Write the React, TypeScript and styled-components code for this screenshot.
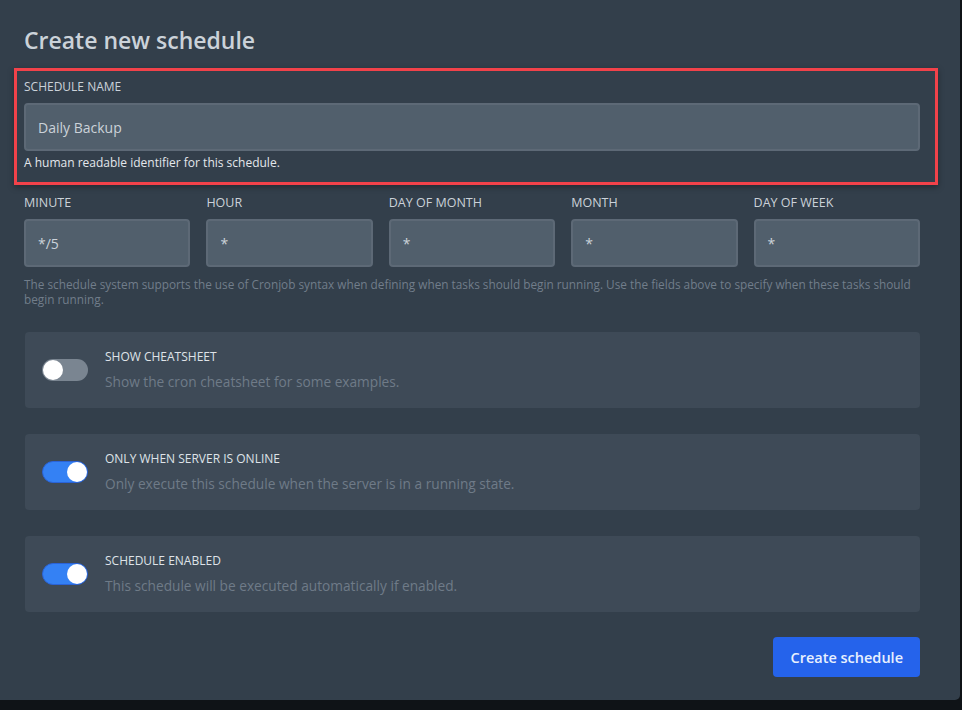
import React, { FC } from 'react';
import styled, { createGlobalStyle } from 'styled-components';

const GlobalStyle = createGlobalStyle`
  html, body {
    margin: 0;
    padding: 0;
    background: #0f1317;
  }
  body {
    font-family: 'Open Sans', 'Noto Sans', sans-serif;
    -webkit-font-smoothing: antialiased;
  }
  * { box-sizing: border-box; }
`;

const Page = styled.div`
  width: 962px;
  height: 710px;
  display: flex;
  align-items: flex-start;
  background: #0f1317;
`;

const Modal = styled.div`
  width: 960px;
  height: 700px;
  background: #333f4b;
  border-radius: 0 0 5px 0;
  padding: 24px 40px 23px 24px;
  display: flex;
  flex-direction: column;
`;

const Title = styled.h2`
  margin: 0 0 13px;
  font-size: 23px;
  line-height: 32px;
  font-weight: 600;
  color: #cbd2d9;
`;

const FieldGroup = styled.div`
  position: relative;
  margin-top: 10px;
  display: flex;
  flex-direction: column;
`;

const Highlight = styled.div`
  position: absolute;
  top: -11px;
  left: -10px;
  right: -18px;
  bottom: -14px;
  border: 3px solid #f2424a;
  box-shadow: 0 2px 6px rgba(0, 0, 0, 0.35);
  pointer-events: none;
`;

const Label = styled.label<{ size?: number }>`
  display: block;
  font-size: ${(p) => p.size ?? 12}px;
  line-height: 16px;
  text-transform: uppercase;
  color: #cbd2d9;
  margin-bottom: 8px;
`;

const Input = styled.div`
  height: 48px;
  background: #515f6c;
  border: 2px solid #5d6976;
  border-radius: 4px;
  padding: 0 12px;
  display: flex;
  align-items: center;
  font-size: 14px;
  color: #cbd2d9;
`;

const Help = styled.p`
  margin: 4px 0 0;
  font-size: 12px;
  line-height: 16px;
  color: #e4e7eb;
`;

const CronRow = styled.div`
  display: grid;
  grid-template-columns: repeat(5, 1fr);
  gap: 16px;
  margin-top: 24px;
`;

const CronField = styled.div`
  display: flex;
  flex-direction: column;
`;

const CronNote = styled.p`
  margin: 10px 0 0;
  font-size: 11.8px;
  line-height: 15px;
  color: #717d8a;
`;

const Cards = styled.div`
  display: flex;
  flex-direction: column;
  gap: 26px;
  margin-top: 25px;
`;

const Card = styled.div`
  height: 76px;
  margin-left: 1px;
  background: #3e4a57;
  border-radius: 4px;
  padding: 0 17px 0 17px;
  display: flex;
  align-items: center;
  gap: 17px;
`;

const Toggle = styled.span<{ on: boolean }>`
  position: relative;
  flex: none;
  width: 46px;
  height: 22px;
  border-radius: 11px;
  background: ${(p) => (p.on ? '#3481f4' : '#7a8591')};
  border: ${(p) => (p.on ? '1px solid #2a63d8' : 'none')};
  &::after {
    content: '';
    position: absolute;
    top: ${(p) => (p.on ? '0px' : '1px')};
    left: ${(p) => (p.on ? '24px' : '1px')};
    width: 20px;
    height: 20px;
    border-radius: 50%;
    background: #ffffff;
  }
`;

const CardText = styled.div`
  display: flex;
  flex-direction: column;
  gap: 7px;
  margin-top: 1px;
`;

const CardTitle = styled.span`
  font-size: 12px;
  line-height: 16px;
  text-transform: uppercase;
  color: #dfe3e8;
`;

const CardDesc = styled.span`
  font-size: 13.7px;
  line-height: 20px;
  color: #6f7b88;
`;

const Footer = styled.div`
  display: flex;
  justify-content: flex-end;
  margin-top: 25px;
`;

const Button = styled.button`
  height: 40px;
  padding: 0 17px;
  border: none;
  border-radius: 4px;
  background: #2563eb;
  color: #e8f0fe;
  font-family: 'Open Sans', 'Noto Sans', sans-serif;
  font-size: 14.5px;
  font-weight: 600;
  cursor: pointer;
`;

const cron = [
  { label: 'Minute', value: '*/5' },
  { label: 'Hour', value: '*' },
  { label: 'Day of month', value: '*' },
  { label: 'Month', value: '*' },
  { label: 'Day of week', value: '*' },
];

const options = [
  { title: 'Show Cheatsheet', desc: 'Show the cron cheatsheet for some examples.', on: false },
  { title: 'Only When Server Is Online', desc: 'Only execute this schedule when the server is in a running state.', on: true },
  { title: 'Schedule Enabled', desc: 'This schedule will be executed automatically if enabled.', on: true },
];

const App: FC = () => (
  <>
    <GlobalStyle />
    <Page>
      <Modal>
        <Title>Create new schedule</Title>
        <FieldGroup>
          <Label>Schedule Name</Label>
          <Input>Daily Backup</Input>
          <Help>A human readable identifier for this schedule.</Help>
          <Highlight />
        </FieldGroup>
        <CronRow>
          {cron.map((c) => (
            <CronField key={c.label}>
              <Label size={12.5}>{c.label}</Label>
              <Input>{c.value}</Input>
            </CronField>
          ))}
        </CronRow>
        <CronNote>
          The schedule system supports the use of Cronjob syntax when defining when tasks should begin
          running. Use the fields above to specify when these tasks should begin running.
        </CronNote>
        <Cards>
          {options.map((o) => (
            <Card key={o.title}>
              <Toggle on={o.on} />
              <CardText>
                <CardTitle>{o.title}</CardTitle>
                <CardDesc>{o.desc}</CardDesc>
              </CardText>
            </Card>
          ))}
        </Cards>
        <Footer>
          <Button>Create schedule</Button>
        </Footer>
      </Modal>
    </Page>
  </>
);

export default App;
